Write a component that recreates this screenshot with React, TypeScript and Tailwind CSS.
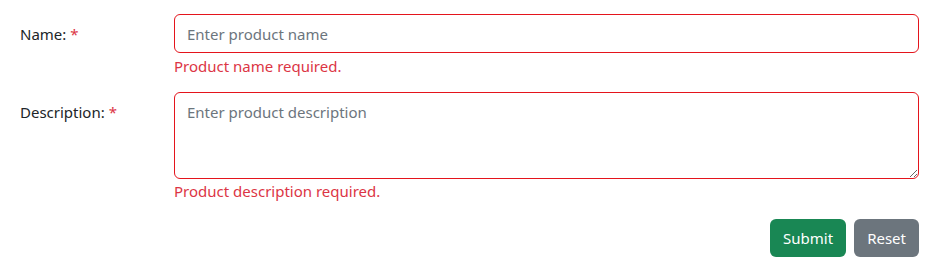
export default function App() {
  return (
    <div className="w-[935px] h-[270px] bg-white pl-5 pr-4 pt-[14px] text-[15px] text-[#212529]" style={{ fontFamily: '"Noto Sans", "Open Sans", sans-serif' }}>
      <form className="flex flex-col">
        <div className="flex">
          <label className="w-[154px] shrink-0 pt-[9px] leading-[22px]">
            Name: <span className="text-[#dc3545]">*</span>
          </label>
          <div className="flex-1">
            <input
              type="text"
              placeholder="Enter product name"
              className="w-full h-[39px] rounded-[6px] border border-[#e4141c] px-3 leading-[22px] outline-none placeholder:text-[#6c757d]"
            />
            <div className="mt-[2px] leading-[22px] text-[#dc3545]">Product name required.</div>
          </div>
        </div>
        <div className="flex mt-[15px]">
          <label className="w-[154px] shrink-0 pt-[9px] leading-[22px]">
            Description: <span className="text-[#dc3545]">*</span>
          </label>
          <div className="flex-1">
            <textarea
              placeholder="Enter product description"
              className="block w-full h-[87px] rounded-[6px] border border-[#e4141c] px-3 py-[8px] leading-[22px] outline-none placeholder:text-[#6c757d]"
            />
            <div className="mt-[1px] leading-[22px] text-[#dc3545]">Product description required.</div>
          </div>
        </div>
        <div className="flex justify-end gap-2 mt-[17px]">
          <button type="button" className="h-[38px] rounded-[6px] bg-[#198754] px-[13px] text-white">Submit</button>
          <button type="button" className="h-[38px] rounded-[6px] bg-[#6c757d] px-[13px] text-white">Reset</button>
        </div>
      </form>
    </div>
  );
}
